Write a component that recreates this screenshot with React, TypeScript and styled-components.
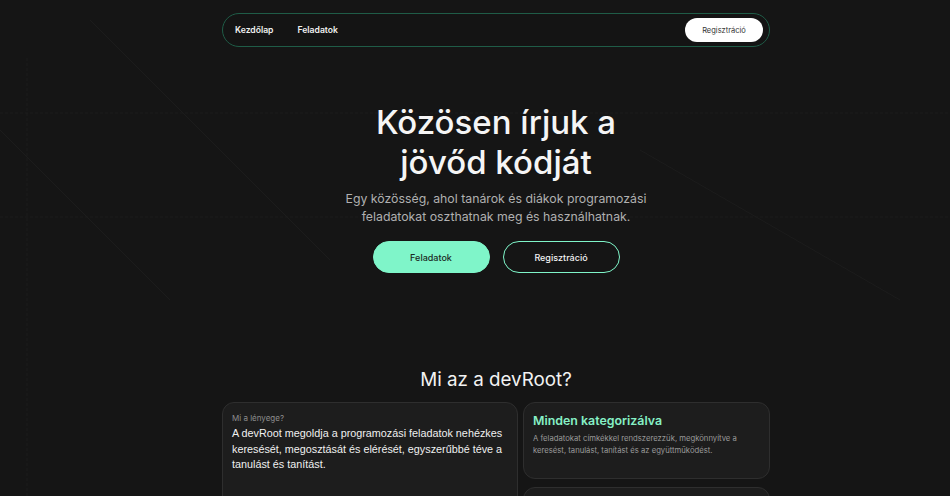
import React from "react";
import styled, { createGlobalStyle } from "styled-components";

const Global = createGlobalStyle`
  html, body { margin: 0; padding: 0; background: #151515; }
  body { font-family: Inter, "Noto Sans", sans-serif; color: #f2f2f2; overflow: hidden; }
  * { box-sizing: border-box; }
`;

const Page = styled.div`
  position: relative;
  width: 950px;
  height: 496px;
  overflow: hidden;
  background: #151515;
  padding-left: 42px;
`;

const Decor = styled.svg`
  position: absolute;
  inset: 0;
  width: 950px;
  height: 496px;
  pointer-events: none;
`;

const Inner = styled.div`
  position: relative;
  width: 548px;
  margin: 0 auto;
  padding-top: 13px;
  display: flex;
  flex-direction: column;
`;

const Nav = styled.nav`
  height: 34px;
  border: 1px solid #1f5c47;
  border-radius: 17px;
  display: flex;
  align-items: center;
  padding: 0 6px 0 12px;
  background: #141414;
`;

const NavLink = styled.a`
  font-size: 8.6px;
  font-weight: 600;
  color: #f0f0f0;
  margin-right: 24px;
  text-decoration: none;
`;

const NavButton = styled.button`
  margin-left: auto;
  height: 24px;
  width: 78px;
  border: none;
  border-radius: 12px;
  background: #ffffff;
  color: #333;
  font-family: Inter, sans-serif;
  font-size: 7.5px;
  font-weight: 400;
`;

const Hero = styled.section`
  display: flex;
  flex-direction: column;
  align-items: center;
  padding-top: 55px;
`;

const Title = styled.h1`
  margin: 0;
  font-size: 33px;
  font-weight: 500;
  line-height: 40px;
  text-align: center;
  color: #f5f5f5;
`;

const Sub = styled.p`
  margin: 8px 0 0;
  font-size: 12.3px;
  line-height: 18px;
  text-align: center;
  color: #b0b0b0;
`;

const Buttons = styled.div`
  display: flex;
  gap: 13px;
  margin-top: 15px;
`;

const HeroButton = styled.button<{ $primary?: boolean }>`
  width: 117px;
  height: 32px;
  border-radius: 16px;
  font-family: Inter, sans-serif;
  font-size: 9px;
  font-weight: 500;
  border: 1px solid #7ff5c9;
  background: ${(p) => (p.$primary ? "#7ff5c9" : "transparent")};
  color: ${(p) => (p.$primary ? "#1b2a24" : "#f2f2f2")};
`;

const SectionTitle = styled.h2`
  margin: 95px 0 0;
  font-size: 18.8px;
  font-weight: 400;
  line-height: 24px;
  text-align: center;
  color: #f2f2f2;
`;

const Grid = styled.div`
  margin-top: 10px;
  display: grid;
  grid-template-columns: 296px 247px;
  gap: 5px;
`;

const Card = styled.div<{ $tall?: boolean }>`
  background: #1d1d1d;
  border: 1px solid #2e2e2e;
  border-radius: 12px;
  padding: 10px 8px 10px 9px;
  height: ${(p) => (p.$tall ? "160px" : "77px")};
`;

const Column = styled.div`
  display: flex;
  flex-direction: column;
  gap: 8px;
`;

const Label = styled.div`
  font-size: 8px;
  color: #8d8d8d;
  line-height: 10px;
`;

const Body = styled.p`
  margin: 3px 0 0;
  font-family: "Liberation Sans", sans-serif;
  font-size: 10.8px;
  line-height: 15.5px;
  color: #f0f0f0;
`;

const CardTitle = styled.h3`
  margin: 0;
  font-size: 12.4px;
  font-weight: 600;
  color: #86f0c6;
  line-height: 16px;
`;

const CardText = styled.p`
  margin: 4px 0 0;
  font-size: 7.7px;
  line-height: 12px;
  color: #9a9a9a;
`;

export default function App() {
  return (
    <>
      <Global />
      <Page>
        <Decor viewBox="0 0 950 496">
          <g stroke="#1c1c1c" strokeWidth="1" fill="none">
            <line x1="0" y1="113" x2="950" y2="113" strokeDasharray="3 2" />
            <line x1="0" y1="217" x2="950" y2="217" strokeDasharray="3 2" />
            <line x1="27" y1="58" x2="27" y2="496" strokeDasharray="3 2" />
            <line x1="0" y1="130" x2="170" y2="300" />
            <line x1="90" y1="20" x2="330" y2="260" />
            <line x1="640" y1="150" x2="900" y2="300" />
          </g>
        </Decor>
        <Inner>
          <Nav>
            <NavLink>Kezdőlap</NavLink>
            <NavLink>Feladatok</NavLink>
            <NavButton>Regisztráció</NavButton>
          </Nav>
          <Hero>
            <Title>
              Közösen írjuk a<br />jövőd kódját
            </Title>
            <Sub>
              Egy közösség, ahol tanárok és diákok programozási
              <br />
              feladatokat oszthatnak meg és használhatnak.
            </Sub>
            <Buttons>
              <HeroButton $primary>Feladatok</HeroButton>
              <HeroButton>Regisztráció</HeroButton>
            </Buttons>
          </Hero>
          <SectionTitle>Mi az a devRoot?</SectionTitle>
          <Grid>
            <Card $tall>
              <Label>Mi a lényege?</Label>
              <Body>
                A devRoot megoldja a programozási feladatok nehézkes keresését,
                megosztását és elérését, egyszerűbbé téve a tanulást és tanítást.
              </Body>
            </Card>
            <Column>
              <Card>
                <CardTitle>Minden kategorizálva</CardTitle>
                <CardText>
                  A feladatokat címkékkel rendszerezzük, megkönnyítve a
                  keresést, tanulást, tanítást és az együttműködést.
                </CardText>
              </Card>
              <Card />
            </Column>
          </Grid>
        </Inner>
      </Page>
    </>
  );
}
